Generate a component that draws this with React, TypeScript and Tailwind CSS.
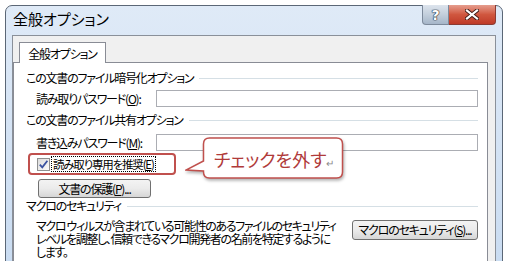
import React from "react";

const jp = "font-['Noto_Sans_CJK_JP','Noto_Sans',sans-serif] [font-feature-settings:'palt']";

function SectionHeader({ label }: { label: string }) {
    return (
        <div className="flex items-center h-[16px] text-[12px] leading-[16px] text-black">
            <span className="whitespace-nowrap">{label}</span>
            <div className="flex-1 h-px bg-[#d5dfe5] ml-[6px] mt-[1px]" />
        </div>
    );
}

function PasswordRow({ label }: { label: React.ReactNode }) {
    return (
        <div className="flex items-center h-[17px] pl-[10px]">
            <span className="w-[120px] whitespace-nowrap text-[12px] leading-[16px]">{label}</span>
            <div className="flex-1 h-[17px] bg-white border border-[#abadb3]" />
        </div>
    );
}

function Button({ children, className }: { children: React.ReactNode; className?: string }) {
    return (
        <div
            className={
                "flex shrink-0 items-center justify-center rounded-[3px] border border-[#707070] bg-gradient-to-b from-[#f3f3f3] via-[#ebebeb] to-[#d6d6d6] text-[12px] leading-[14px] text-black whitespace-nowrap " +
                (className ?? "")
            }
        >
            {children}
        </div>
    );
}

export default function App() {
    return (
        <div className={"relative w-[511px] h-[261px] overflow-hidden bg-white " + jp}>
            {/* window */}
            <div className="ml-[5px] mt-[5px] w-[498px] h-[280px] rounded-t-[7px] border border-[#5b6776] bg-gradient-to-b from-[#dfeaf7] to-[#c8dbf1] flex flex-col">
                {/* title bar */}
                <div className="h-[29px] flex items-start shrink-0">
                    <span className="pl-[7px] pt-[3px] text-[15px] leading-[20px] text-black whitespace-nowrap">全般オプション</span>
                    <div className="ml-auto mr-[6px] -mt-px flex">
                        <div className="w-[27px] h-[20px] rounded-bl-[4px] border border-[#7d8a9b] border-t-0 bg-gradient-to-b from-[#dde4ed] via-[#c3cfdc] to-[#a6b6c9] flex items-center justify-center font-['DejaVu_Sans',sans-serif] text-[14px] leading-[16px] font-bold text-white [text-shadow:0_0_1px_#2f3a48,0_0_1px_#2f3a48,0_0_1px_#2f3a48,0_0_1px_#2f3a48]">
                            ?
                        </div>
                        <div className="w-[47px] h-[20px] rounded-br-[4px] border border-[#8a3b33] border-t-0 border-l-0 bg-gradient-to-b from-[#e59d8e] via-[#d0573f] to-[#bf3a28] flex items-center justify-center">
                            <svg width="14" height="11" viewBox="0 0 14 11">
                                <path d="M2 1.5 L12 9.5 M12 1.5 L2 9.5" stroke="#3d1a16" strokeWidth="4" strokeLinecap="square" />
                                <path d="M2 1.5 L12 9.5 M12 1.5 L2 9.5" stroke="#ffffff" strokeWidth="2.2" strokeLinecap="square" />
                            </svg>
                        </div>
                    </div>
                </div>

                {/* client */}
                <div className="flex-1 px-[6px] tracking-[-1.2px]">
                    <div className="h-full border border-[#8a9099] bg-[#f0f0f0] pt-[6px] pr-[7px] flex flex-col">
                        {/* tab */}
                        <div className="relative z-10 -mb-px ml-[6px] w-[87px] h-[21px] border border-b-0 border-[#898c95] bg-white flex items-center justify-center text-[12px] leading-[16px] pt-[1px]">
                            全般オプション
                        </div>
                        {/* tab panel */}
                        <div className="flex-1 border border-[#898c95] bg-white pl-[12px] pr-[9px] pt-[7px] flex flex-col text-black">
                            <SectionHeader label="この文書のファイル暗号化オプション" />
                            <div className="mt-[4px]">
                                <PasswordRow label={<>読み取りパスワード(<span className="underline">O</span>):</>} />
                            </div>
                            <div className="mt-[5px]">
                                <SectionHeader label="この文書のファイル共有オプション" />
                            </div>
                            <div className="mt-[6px]">
                                <PasswordRow label={<>書き込みパスワード(<span className="underline">M</span>):</>} />
                            </div>
                            {/* highlighted checkbox */}
                            <div className="mt-[2px] ml-[2px] w-[148px] h-[22px] rounded-[4px] border-2 border-[#c0504d] flex items-center pl-[7px]">
                                <div className="shrink-0 w-[13px] h-[13px] border border-[#8f8f8f] bg-gradient-to-br from-[#dcdcdc] to-[#fbfbfb] flex items-center justify-center">
                                    <svg width="11" height="11" viewBox="0 0 11 11">
                                        <path d="M1.8 5.6 L4.3 8.4 L9.4 1.8" fill="none" stroke="#3a52a0" strokeWidth="1.8" />
                                    </svg>
                                </div>
                                <span className="ml-[1px] pl-px pr-[1px] border border-dotted border-black text-[11.5px] leading-[14px] tracking-[-1.2px] whitespace-nowrap">
                                    読み取り専用を推奨(<span className="underline">E</span>)
                                </span>
                            </div>
                            <Button className="mt-[4px] ml-[12px] w-[113px] h-[19px]">
                                文書の保護(<span className="underline">P</span>)...
                            </Button>
                            <SectionHeader label="マクロのセキュリティ" />
                            <div className="mt-[5px] pl-[10px] flex items-start">
                                <p className="text-[12px] leading-[13px] tracking-[-1.35px] whitespace-nowrap">
                                    マクロ ウィルスが含まれている可能性のあるファイルのセキュリティ
                                    <br />
                                    レベルを調整し、信頼できるマクロ開発者の名前を特定するように
                                    <br />
                                    します。
                                </p>
                                <Button className="ml-auto mt-[1px] w-[126px] h-[20px]">
                                    マクロのセキュリティ(<span className="underline">S</span>)...
                                </Button>
                            </div>
                        </div>
                    </div>
                </div>
            </div>

            {/* callout */}
            <div className="absolute left-[185px] top-[137px] w-[162px] h-[44px]">
                <svg width="162" height="44" viewBox="0 0 162 44" className="absolute inset-0 drop-shadow-[1px_2px_1.5px_rgba(0,0,0,0.3)]">
                    <path
                        d="M24.5 1 H151.5 Q157.5 1 157.5 7 V35 Q157.5 41 151.5 41 H24.5 Q18.5 41 18.5 35 V34 L1 33 L18.5 24 V7 Q18.5 1 24.5 1 Z"
                        fill="#ffffff"
                        stroke="#c0504d"
                        strokeWidth="1.5"
                    />
                </svg>
                <div className="absolute left-[29px] top-[11px] flex items-end whitespace-nowrap">
                    <span className="text-[18px] leading-[22px] text-[#b03a3a]">チェックを外す</span>
                    <span className="text-[10px] leading-[15px] text-[#8a8a8a]">↵</span>
                </div>
            </div>
        </div>
    );
}
